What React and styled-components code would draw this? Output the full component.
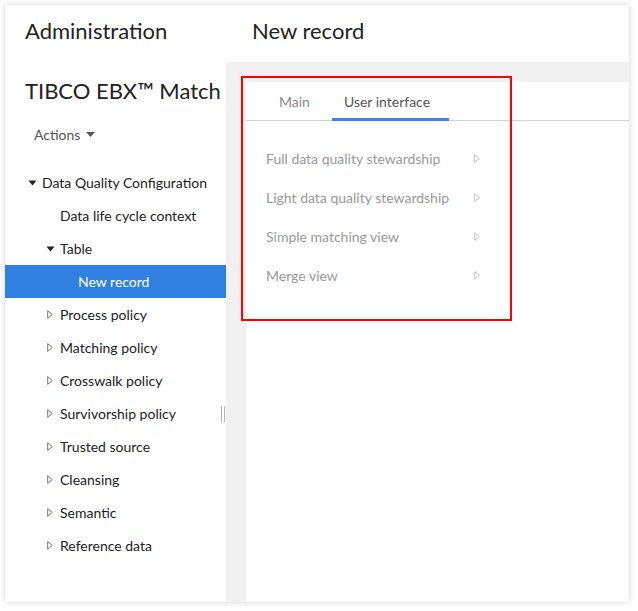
import React from 'react';
import styled, { createGlobalStyle } from 'styled-components';

const GlobalStyle = createGlobalStyle`
    body {
        margin: 0;
        background: #ffffff;
        font-family: 'Lato', 'Liberation Sans', sans-serif;
    }
`;

const Window = styled.div`
    margin: 5px;
    width: 624px;
    height: 597px;
    background: #ffffff;
    box-shadow: 0 0 6px rgba(0, 0, 0, 0.18);
    display: grid;
    grid-template-columns: 221px 1fr;
    grid-template-rows: 57px 1fr;
`;

const HeaderTitle = styled.div`
    display: flex;
    align-items: center;
    padding-left: ${(p) => p.$indent}px;
    padding-bottom: 6px;
    font-size: 22px;
    color: #222222;
`;

const Sidebar = styled.div`
    position: relative;
    display: flex;
    flex-direction: column;
`;

const AppTitle = styled.div`
    height: 56px;
    display: flex;
    align-items: center;
    padding-left: 20px;
    font-size: 22px;
    color: #222222;
    white-space: nowrap;
`;

const ActionsButton = styled.div`
    display: flex;
    align-items: center;
    gap: 6px;
    height: 32px;
    padding-left: 29px;
    font-size: 14px;
    color: #555555;
`;

const Tree = styled.div`
    margin-top: 16px;
    display: flex;
    flex-direction: column;
`;

const TreeRow = styled.div`
    position: relative;
    display: flex;
    align-items: center;
    height: 33px;
    padding-left: ${(p) => 19 + p.$level * 18}px;
    font-size: 14px;
    color: ${(p) => (p.$selected ? '#ffffff' : '#222222')};
    background: ${(p) => (p.$selected ? '#2f80e1' : 'transparent')};
    white-space: nowrap;
`;

const Caret = styled.span`
    width: 18px;
    display: flex;
    align-items: center;
    justify-content: flex-start;
    padding-left: ${(p) => (p.$open ? 4 : 5)}px;
    box-sizing: border-box;
`;

// drag handle on the sidebar edge
const Splitter = styled.div`
    position: absolute;
    left: 216px;
    top: 344px;
    width: 4px;
    height: 16px;
    border-left: 1px solid #b5b5b5;
    border-right: 1px solid #b5b5b5;
    box-sizing: border-box;
`;

const Workspace = styled.div`
    position: relative;
    background: #f1f1f1;
    padding: 20px 0 0 20px;
    display: flex;
`;

const ContentCard = styled.div`
    flex: 1;
    background: #ffffff;
    border-top-left-radius: 4px;
`;

const TabBar = styled.div`
    display: flex;
    gap: 10px;
    height: 38px;
    padding-left: 21px;
    border-bottom: 1px solid #d4d4d4;
`;

const Tab = styled.div`
    display: flex;
    align-items: center;
    padding: 2px ${(p) => (p.$active ? 19 : 12)}px 0 12px;
    font-size: 14px;
    color: ${(p) => (p.$active ? '#555555' : '#8a8a8a')};
    border-bottom: 3px solid ${(p) => (p.$active ? '#3a86e0' : 'transparent')};
    margin-bottom: -1px;
`;

const ViewList = styled.div`
    padding: 18px 0 0 20px;
    display: flex;
    flex-direction: column;
`;

const ViewRow = styled.div`
    width: 214px;
    height: 39px;
    display: flex;
    align-items: center;
    justify-content: space-between;
    font-size: 14px;
    color: #999999;
    white-space: nowrap;
`;

const Highlight = styled.div`
    position: absolute;
    left: 15px;
    top: 14px;
    width: 271px;
    height: 245px;
    border: 2px solid #ff0000;
    box-sizing: border-box;
    pointer-events: none;
`;

const CaretIcon = ({ open, color = '#222' }) =>
    open ? (
        <svg width="9" height="6" viewBox="0 0 9 6">
            <path d="M0.5 0.5 L8.5 0.5 L4.5 5.5 Z" fill={color} />
        </svg>
    ) : (
        <svg width="6" height="9" viewBox="0 0 6 9">
            <path d="M0.7 0.7 L5.3 4.5 L0.7 8.3 Z" fill="none" stroke="#777" strokeWidth="1" />
        </svg>
    );

const ArrowIcon = () => (
    <svg width="6" height="9" viewBox="0 0 6 9">
        <path d="M0.7 0.7 L5.3 4.5 L0.7 8.3 Z" fill="none" stroke="#c2c2c2" strokeWidth="1" />
    </svg>
);

const tree = [
    { label: 'Data Quality Configuration', level: 0, caret: 'open' },
    { label: 'Data life cycle context', level: 1 },
    { label: 'Table', level: 1, caret: 'open' },
    { label: 'New record', level: 2, selected: true },
    { label: 'Process policy', level: 1, caret: 'closed' },
    { label: 'Matching policy', level: 1, caret: 'closed' },
    { label: 'Crosswalk policy', level: 1, caret: 'closed' },
    { label: 'Survivorship policy', level: 1, caret: 'closed' },
    { label: 'Trusted source', level: 1, caret: 'closed' },
    { label: 'Cleansing', level: 1, caret: 'closed' },
    { label: 'Semantic', level: 1, caret: 'closed' },
    { label: 'Reference data', level: 1, caret: 'closed' },
];

const views = [
    'Full data quality stewardship',
    'Light data quality stewardship',
    'Simple matching view',
    'Merge view',
];

const App = () => {
    return (
        <>
            <GlobalStyle />
            <Window>
                <HeaderTitle $indent={20}>Administration</HeaderTitle>
                <HeaderTitle $indent={26}>New record</HeaderTitle>

                <Sidebar>
                    <AppTitle>TIBCO EBX™ Match</AppTitle>
                    <ActionsButton>
                        Actions
                        <svg width="9" height="5" viewBox="0 0 9 5">
                            <path d="M0 0 L9 0 L4.5 5 Z" fill="#555" />
                        </svg>
                    </ActionsButton>
                    <Tree>
                        {tree.map((node) => (
                            <TreeRow key={node.label} $level={node.level} $selected={node.selected}>
                                <Caret $open={node.caret === 'open'}>
                                    {node.caret && <CaretIcon open={node.caret === 'open'} />}
                                </Caret>
                                {node.label}
                            </TreeRow>
                        ))}
                    </Tree>
                    <Splitter />
                </Sidebar>

                <Workspace>
                    <ContentCard>
                        <TabBar>
                            <Tab>Main</Tab>
                            <Tab $active>User interface</Tab>
                        </TabBar>
                        <ViewList>
                            {views.map((v) => (
                                <ViewRow key={v}>
                                    {v}
                                    <ArrowIcon />
                                </ViewRow>
                            ))}
                        </ViewList>
                    </ContentCard>
                    <Highlight />
                </Workspace>
            </Window>
        </>
    );
};

export default App;
